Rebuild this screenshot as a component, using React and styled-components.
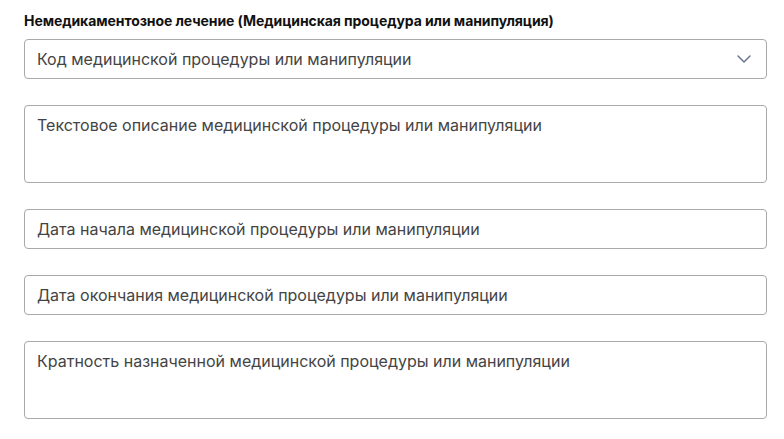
import React from 'react'
import styled, { createGlobalStyle } from 'styled-components'

const GlobalStyle = createGlobalStyle`
  body {
    margin: 0;
    background: #ffffff;
    font-family: Inter, "Noto Sans", sans-serif;
  }
`

const Section = styled.section`
  width: 743px;
  padding: 12px 0 0 24px;
  display: flex;
  flex-direction: column;
`

const Title = styled.h4`
  margin: 0 0 9px;
  font-size: 14px;
  letter-spacing: -0.08px;
  line-height: 18px;
  font-weight: 700;
  color: #111111;
`

const Fields = styled.div`
  display: flex;
  flex-direction: column;
  gap: 26px;
`

const Box = styled.div`
  box-sizing: border-box;
  height: ${p => (p.$tall ? '78px' : '40px')};
  border: 1px solid #a9a9a9;
  border-radius: 4px;
  padding: ${p => (p.$tall ? '8px 12px' : '0 12px')};
  display: flex;
  align-items: ${p => (p.$tall ? 'flex-start' : 'center')};
  justify-content: space-between;
  font-size: 16px;
  line-height: 22px;
  color: #444444;
`

const Chevron = styled.svg`
  width: 14px;
  height: 8px;
  margin-right: 3px;
  color: #6b7690;
`

const Select = ({ children }) => (
  <Box>
    <span>{children}</span>
    <Chevron viewBox="0 0 14 8" fill="none" stroke="currentColor" strokeWidth="1.5" strokeLinecap="round" strokeLinejoin="round">
      <path d="M1 1l6 6 6-6" />
    </Chevron>
  </Box>
)

export default function App() {
  return (
    <>
      <GlobalStyle />
      <Section>
        <Title>Немедикаментозное лечение (Медицинская процедура или манипуляция)</Title>
        <Fields>
          <Select>Код медицинской процедуры или манипуляции</Select>
          <Box $tall>Текстовое описание медицинской процедуры или манипуляции</Box>
          <Box>Дата начала медицинской процедуры или манипуляции</Box>
          <Box>Дата окончания медицинской процедуры или манипуляции</Box>
          <Box $tall>Кратность назначенной медицинской процедуры или манипуляции</Box>
        </Fields>
      </Section>
    </>
  )
}
